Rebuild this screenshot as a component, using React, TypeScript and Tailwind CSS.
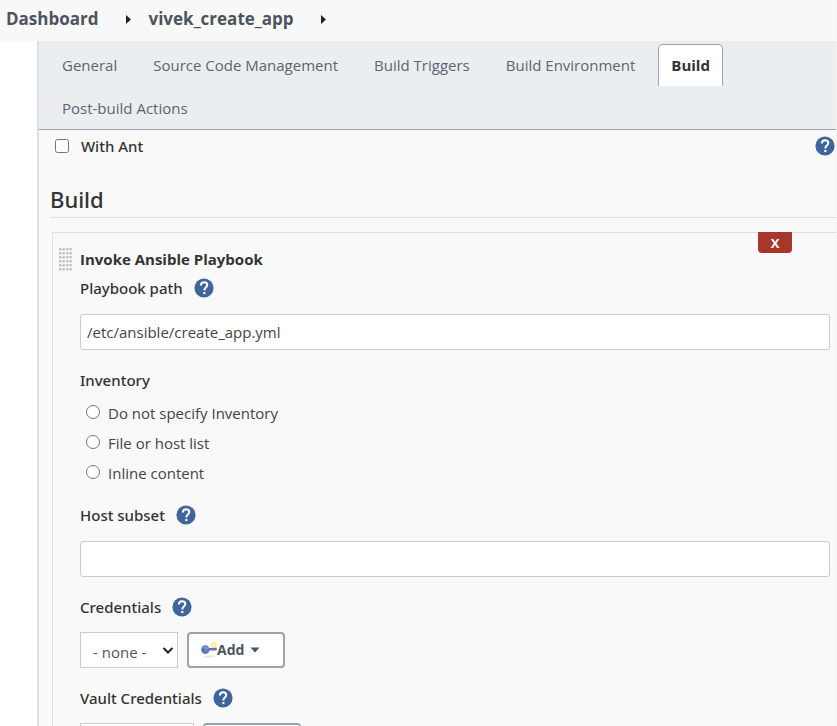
import { useId, useState } from "react";
import type { ReactNode } from "react";

const tabs = [
  "General",
  "Source Code Management",
  "Build Triggers",
  "Build Environment",
  "Build",
  "Post-build Actions",
];

const inventoryOptions = ["Do not specify Inventory", "File or host list", "Inline content"];

function BreadcrumbArrow() {
  return (
    <svg className="mr-[18px] ml-[27px] h-[9px] w-[5px]" viewBox="0 0 5 9" aria-hidden="true">
      <path d="M0 0 5 4.500 0 9Z" fill="#222" />
    </svg>
  );
}

function HelpButton({ topic }: { topic: string }) {
  return (
    <button type="button" aria-label={`Help for ${topic}`} className="block h-5 w-5 shrink-0 cursor-pointer">
      <svg viewBox="0 0 20 20" className="h-5 w-5" aria-hidden="true">
        <circle cx="10" cy="10" r="9.6" fill="#40659a" />
        <path
          d="M6.900 7.600C6.900 5.400 8.200 4.200 10.100 4.200s3.200 1.200 3.200 2.900c0 2.400-3 2.600-3 5.300"
          fill="none"
          stroke="#fff"
          strokeWidth="2"
        />
        <rect x="9.300" y="14" width="2.100" height="2.100" fill="#fff" />
      </svg>
    </button>
  );
}

function KeyIcon() {
  return (
    <svg className="h-4 w-4" viewBox="0 0 16 16" aria-hidden="true">
      <ellipse cx="8" cy="14.500" rx="6" ry="0.9" fill="#e8e8e8" />
      <circle cx="13" cy="3" r="2.9" fill="#fbf38a" />
      <circle cx="13" cy="3" r="1.2" fill="#fffbd0" />
      <path d="M6.500 6 15.500 5.800 16 8 14.800 8.700 14 8 13 9 12 8.200 7 8.800Z" fill="#5b78b4" />
      <ellipse cx="4.300" cy="7.600" rx="4.200" ry="4.300" fill="#5f7cb8" />
      <ellipse cx="4" cy="6.200" rx="2.800" ry="1.900" fill="#7c96cb" />
      <circle cx="2.600" cy="7.600" r="0.900" fill="#2f477c" />
    </svg>
  );
}

function DragHandle() {
  return (
    <svg className="h-6 w-[13px] cursor-move" viewBox="0 0 13 24" aria-hidden="true">
      <defs>
        <pattern id="grip" width="3.5" height="4" patternUnits="userSpaceOnUse">
          <rect y="1" width="2.500" height="2.500" fill="#c4c4c4" />
        </pattern>
      </defs>
      <rect width="13" height="24" fill="url(#grip)" />
    </svg>
  );
}

function FieldLabel({ htmlFor, text }: { htmlFor: string; text: string }) {
  return (
    <div className="flex h-6 items-center gap-[11px]">
      <label htmlFor={htmlFor} className="font-['Noto_Sans','Open_Sans',sans-serif] font-medium text-[#333]">
        {text}
      </label>
      <HelpButton topic={text} />
    </div>
  );
}

function TextField({ label, initial }: { label: string; initial: string }) {
  const id = useId();
  return (
    <div>
      <FieldLabel htmlFor={id} text={label} />
      <input
        id={id}
        type="text"
        defaultValue={initial}
        className="mt-3.5 block h-9 w-full rounded-[3px] border border-[#ccc] bg-white px-1.5 text-[#444] outline-none"
      />
    </div>
  );
}

function CredentialField({ label, children }: { label: string; children: ReactNode }) {
  const id = useId();
  return (
    <div>
      <FieldLabel htmlFor={id} text={label} />
      <div className="mt-[13px] flex gap-[9px]">
        <div className="relative">
          <select
            id={id}
            className="block h-9 appearance-none border border-[#ccc] bg-white pt-1 pr-[30px] pl-3 text-[#555] outline-none"
          >
            {children}
          </select>
          <svg
            className="pointer-events-none absolute top-[15px] right-1 h-2 w-3"
            viewBox="0 0 12 8"
            aria-hidden="true"
          >
            <path d="M1.500 1 6 5.500 10.500 1" fill="none" stroke="#222" strokeWidth="2" />
          </svg>
        </div>
        <button
          type="button"
          className="flex h-9 w-[98px] cursor-pointer items-center rounded border-2 border-[#98a3ae] bg-white pl-3 text-sm font-bold text-[#4d545d]"
        >
          <KeyIcon />
          Add
          <svg className="ml-1.5 h-1.5 w-2.5" viewBox="0 0 10 6" aria-hidden="true">
            <path d="M0.500 0.500h9L5 5.500Z" fill="#4d545d" />
          </svg>
        </button>
      </div>
    </div>
  );
}

export default function App() {
  const [active, setActive] = useState("Build");

  return (
    <div className="h-screen overflow-hidden border-r border-[#f4f4f4] bg-white font-['Open_Sans','Noto_Sans',sans-serif] text-[15px] leading-6 text-[#444]">
      <nav
        aria-label="Breadcrumb"
        className="flex h-[41px] items-center bg-[#f8f8f8] pb-[3px] pl-1.5 text-[17px] font-bold text-[#4d545d]"
      >
        <a href="#dashboard">Dashboard</a>
        <BreadcrumbArrow />
        <a href="#job">vivek_create_app</a>
        <BreadcrumbArrow />
      </nav>

      <main className="ml-[37px] border-l-2 border-[#dfdfdf] bg-[#f9f9f9]">
        <div
          role="tablist"
          className="flex flex-wrap gap-x-2.5 gap-y-px border-b border-[#9ba6b0] bg-[#eaeef1] pt-[3px] pl-2.5"
        >
          {tabs.map((tab) => (
            <button
              key={tab}
              type="button"
              role="tab"
              aria-selected={active === tab}
              onClick={() => setActive(tab)}
              className={
                active === tab
                  ? "h-[42px] cursor-pointer rounded-t-[5px] border border-b-0 border-[#9ba6b0] bg-white px-3 pb-0.5 font-bold text-[#333]"
                  : "h-[42px] cursor-pointer border border-b-0 border-transparent px-3 pb-0.5 text-[#5c6570]"
              }
            >
              {tab}
            </button>
          ))}
        </div>

        <div className="flex items-center justify-between pt-1 pr-px pl-4">
          <label className="flex items-center gap-3 font-['Noto_Sans','Open_Sans',sans-serif] font-medium text-[#333]">
            <input type="checkbox" className="h-3.5 w-3.5" />
            With Ant
          </label>
          <HelpButton topic="With Ant" />
        </div>

        <section className="pl-[11px]">
          <h2 className="mt-[25px] border-b border-[#dfdfdf] pb-0.5 font-['Noto_Sans','Open_Sans',sans-serif] text-[22px] leading-8 font-medium text-[#333]">
            Build
          </h2>

          <div className="relative mt-3.5 ml-0.5 flex gap-2 border-t border-l border-[#dfdfdf] pt-3.5 pr-1.5 pb-8 pl-1.5">
            <button
              type="button"
              aria-label="Delete build step"
              className="absolute -top-px right-11 h-[21px] w-[34px] cursor-pointer rounded-b bg-[#a9362a] text-[13px] leading-5 font-bold text-white"
            >
              X
            </button>
            <DragHandle />
            <div className="min-w-0 flex-1">
              <h3 className="mb-[5px] font-bold text-[#333]">Invoke Ansible Playbook</h3>
              <TextField label="Playbook path" initial="/etc/ansible/create_app.yml" />

              <fieldset className="mt-[18px]">
                <legend className="font-['Noto_Sans','Open_Sans',sans-serif] font-medium text-[#333]">Inventory</legend>
                <div className="mt-[9px] flex flex-col gap-1.5 pl-1.5">
                  {inventoryOptions.map((option) => (
                    <label key={option} className="flex items-start gap-2">
                      <input type="radio" name="inventory" className="mt-1 h-3.5 w-3.5" />
                      {option}
                    </label>
                  ))}
                </div>
              </fieldset>

              <div className="mt-[18px] flex flex-col gap-[18px]">
                <TextField label="Host subset" initial="" />
                <CredentialField label="Credentials">
                  <option>- none -</option>
                </CredentialField>
                <CredentialField label="Vault Credentials">
                  <option>- current -</option>
                </CredentialField>
              </div>
            </div>
          </div>
        </section>
      </main>
    </div>
  );
}
